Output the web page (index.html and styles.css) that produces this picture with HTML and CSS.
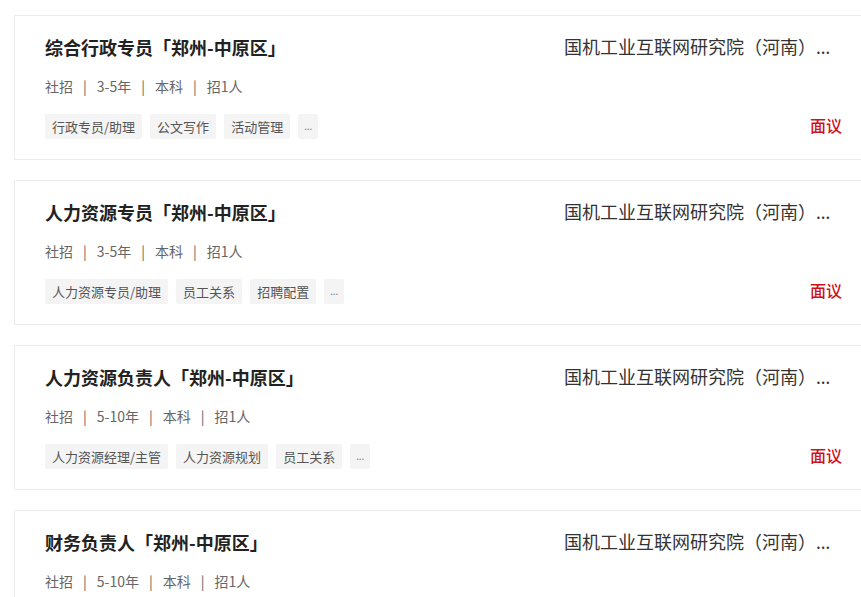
FILE: index.html
```html
<!DOCTYPE html>
<html>
  <head>
    <meta http-equiv="Content-Type" content="text/html;charset=utf-8" />
    <title>职位列表</title>
    <link rel="stylesheet" href="styles.css">
  </head>
  <body>
    <div class="job-list">
      <div class="job-card">
        <div class="job-main">
          <div class="job-title">综合行政专员「郑州-中原区」</div>
          <div class="job-meta">
            社招<span class="sep">|</span>3-5年<span class="sep">|</span>本科<span class="sep">|</span>招1人
          </div>
          <div class="job-tags">
            <span class="tag">行政专员/助理</span>
            <span class="tag">公文写作</span>
            <span class="tag">活动管理</span>
            <span class="tag more">...</span>
          </div>
        </div>
        <div class="job-side">
          <div class="company">国机工业互联网研究院（河南）有限公司</div>
          <div class="salary">面议</div>
        </div>
      </div>

      <div class="job-card">
        <div class="job-main">
          <div class="job-title">人力资源专员「郑州-中原区」</div>
          <div class="job-meta">
            社招<span class="sep">|</span>3-5年<span class="sep">|</span>本科<span class="sep">|</span>招1人
          </div>
          <div class="job-tags">
            <span class="tag">人力资源专员/助理</span>
            <span class="tag">员工关系</span>
            <span class="tag">招聘配置</span>
            <span class="tag more">...</span>
          </div>
        </div>
        <div class="job-side">
          <div class="company">国机工业互联网研究院（河南）有限公司</div>
          <div class="salary">面议</div>
        </div>
      </div>

      <div class="job-card">
        <div class="job-main">
          <div class="job-title">人力资源负责人「郑州-中原区」</div>
          <div class="job-meta">
            社招<span class="sep">|</span>5-10年<span class="sep">|</span>本科<span class="sep">|</span>招1人
          </div>
          <div class="job-tags">
            <span class="tag">人力资源经理/主管</span>
            <span class="tag">人力资源规划</span>
            <span class="tag">员工关系</span>
            <span class="tag more">...</span>
          </div>
        </div>
        <div class="job-side">
          <div class="company">国机工业互联网研究院（河南）有限公司</div>
          <div class="salary">面议</div>
        </div>
      </div>

      <div class="job-card">
        <div class="job-main">
          <div class="job-title">财务负责人「郑州-中原区」</div>
          <div class="job-meta">
            社招<span class="sep">|</span>5-10年<span class="sep">|</span>本科<span class="sep">|</span>招1人
          </div>
          <div class="job-tags">
            <span class="tag">财务经理/主管</span>
            <span class="tag">财务分析</span>
            <span class="tag">税务筹划</span>
            <span class="tag more">...</span>
          </div>
        </div>
        <div class="job-side">
          <div class="company">国机工业互联网研究院（河南）有限公司</div>
          <div class="salary">面议</div>
        </div>
      </div>
    </div>
  </body>
</html>
```

FILE: styles.css
```css
html,
body {
  margin: 0;
  background: #fff;
  overflow: hidden;
}

body {
  font-family: "Noto Sans CJK SC", sans-serif;
  color: #333;
}

.job-list {
  width: 859px;
  padding: 15px 0 0 14px;
  display: flex;
  flex-direction: column;
  gap: 20px;
}

.job-card {
  display: flex;
  border: 1px solid #ececec;
  padding: 19px 30px 20px 30px;
  background: #fff;
}

.job-main {
  flex: 1;
  min-width: 0;
}

.job-title {
  font-size: 18px;
  line-height: 25px;
  font-weight: 600;
  color: #222;
}

.job-meta {
  margin-top: 16px;
  font-size: 14px;
  line-height: 20px;
  color: #666;
}

.sep {
  margin: 0 10px;
  color: #666;
}

.job-tags {
  margin-top: 18px;
  display: flex;
  gap: 8px;
}

.tag {
  height: 25px;
  line-height: 25px;
  padding: 0 7px;
  font-size: 13px;
  color: #555;
  background: #f4f4f4;
  border-radius: 2px;
}

.tag.more {
  font-family: "Noto Sans", sans-serif;
  font-size: 10px;
  padding: 0 6px;
  color: #777;
}

.job-side {
  width: 278px;
  display: flex;
  flex-direction: column;
  justify-content: space-between;
}

.company {
  font-family: "Noto Sans", "Noto Sans CJK SC", sans-serif;
  font-size: 18px;
  line-height: 25px;
  color: #333;
  white-space: nowrap;
  overflow: hidden;
  text-overflow: ellipsis;
}

.salary {
  align-self: flex-end;
  margin-bottom: 2px;
  font-size: 16px;
  line-height: 24px;
  font-weight: 500;
  color: #d0101b;
}
```
